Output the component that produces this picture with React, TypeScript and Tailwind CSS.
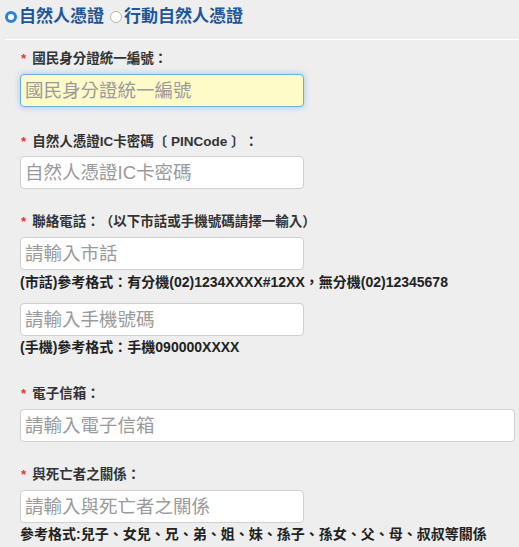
import React from "react"

const font = { fontFamily: '"Liberation Sans", "Noto Sans CJK TC", sans-serif' }

function Radio({ checked, label }: { checked?: boolean; label: string }) {
  return (
    <label className="flex items-center">
      {checked ? (
        <span className="w-[12px] h-[12px] rounded-full border-[3px] border-[#2f7fd6] bg-white" />
      ) : (
        <span className="w-[12px] h-[12px] rounded-full border border-[#b5b5b5] bg-white" />
      )}
      <span className="ml-[2px] text-[17px] font-bold text-[#1d579a] leading-[20px]">{label}</span>
    </label>
  )
}

function Label({ text, className = "" }: { text: string; className?: string }) {
  return (
    <div className={"flex items-center h-[18px] text-[13.5px] font-bold text-[#333] leading-[18px] whitespace-nowrap " + className}>
      <span className="text-[#e23b2e] ml-[1px] mr-[6px]">*</span>
      {text}
    </div>
  )
}

function Input({ placeholder, wide, focused, className = "" }: { placeholder: string; wide?: boolean; focused?: boolean; className?: string }) {
  return (
    <input
      placeholder={placeholder}
      style={font}
      className={
        "block h-[33px] px-[4px] rounded-[4px] text-[18.5px] outline-none placeholder:text-[#9a9a9a] " +
        (wide ? "w-[495px] " : "w-[284px] ") +
        (focused
          ? "bg-[#fffbc9] border border-[#66afe9] shadow-[0_0_6px_rgba(102,175,233,0.6)] "
          : "bg-white border border-[#cfcfcf] ") +
        className
      }
    />
  )
}

function Help({ text, className = "" }: { text: string; className?: string }) {
  return <div className={"h-[18px] text-[14px] font-bold text-[#222] leading-[18px] whitespace-nowrap " + className}>{text}</div>
}

export default function App() {
  return (
    <div className="min-h-screen bg-[#eeeeee] [text-spacing-trim:space-all]" style={font}>
      <div className="flex items-center gap-[6px] h-[32px] pl-[5px] pt-[1px]">
        <Radio checked label="自然人憑證" />
        <Radio label="行動自然人憑證" />
      </div>
      <div className="ml-[5px] mt-[7px] border-t border-white" />
      <div className="pl-[20px]">
        <Label text="國民身分證統一編號：" className="mt-[10px]" />
        <Input placeholder="國民身分證統一編號" focused className="mt-[6px]" />

        <Label text="自然人憑證IC卡密碼〔 PINCode 〕：" className="mt-[26px]" />
        <Input placeholder="自然人憑證IC卡密碼" className="mt-[5px]" />

        <Label text="聯絡電話：（以下市話或手機號碼請擇一輸入）" className="mt-[24px]" />
        <Input placeholder="請輸入市話" className="mt-[6px]" />
        <Help text="(市話)參考格式：有分機(02)1234XXXX#12XX，無分機(02)12345678" className="mt-[3px]" />
        <Input placeholder="請輸入手機號碼" className="mt-[12px]" />
        <Help text="(手機)參考格式：手機090000XXXX" className="mt-[2px]" />

        <Label text="電子信箱：" className="mt-[29px]" />
        <Input placeholder="請輸入電子信箱" wide className="mt-[6px]" />

        <Label text="與死亡者之關係：" className="mt-[24px]" />
        <Input placeholder="請輸入與死亡者之關係" className="mt-[6px]" />
        <Help text="參考格式:兒子、女兒、兄、弟、姐、妹、孫子、孫女、父、母、叔叔等關係" className="mt-[2px]" />
      </div>
    </div>
  )
}
